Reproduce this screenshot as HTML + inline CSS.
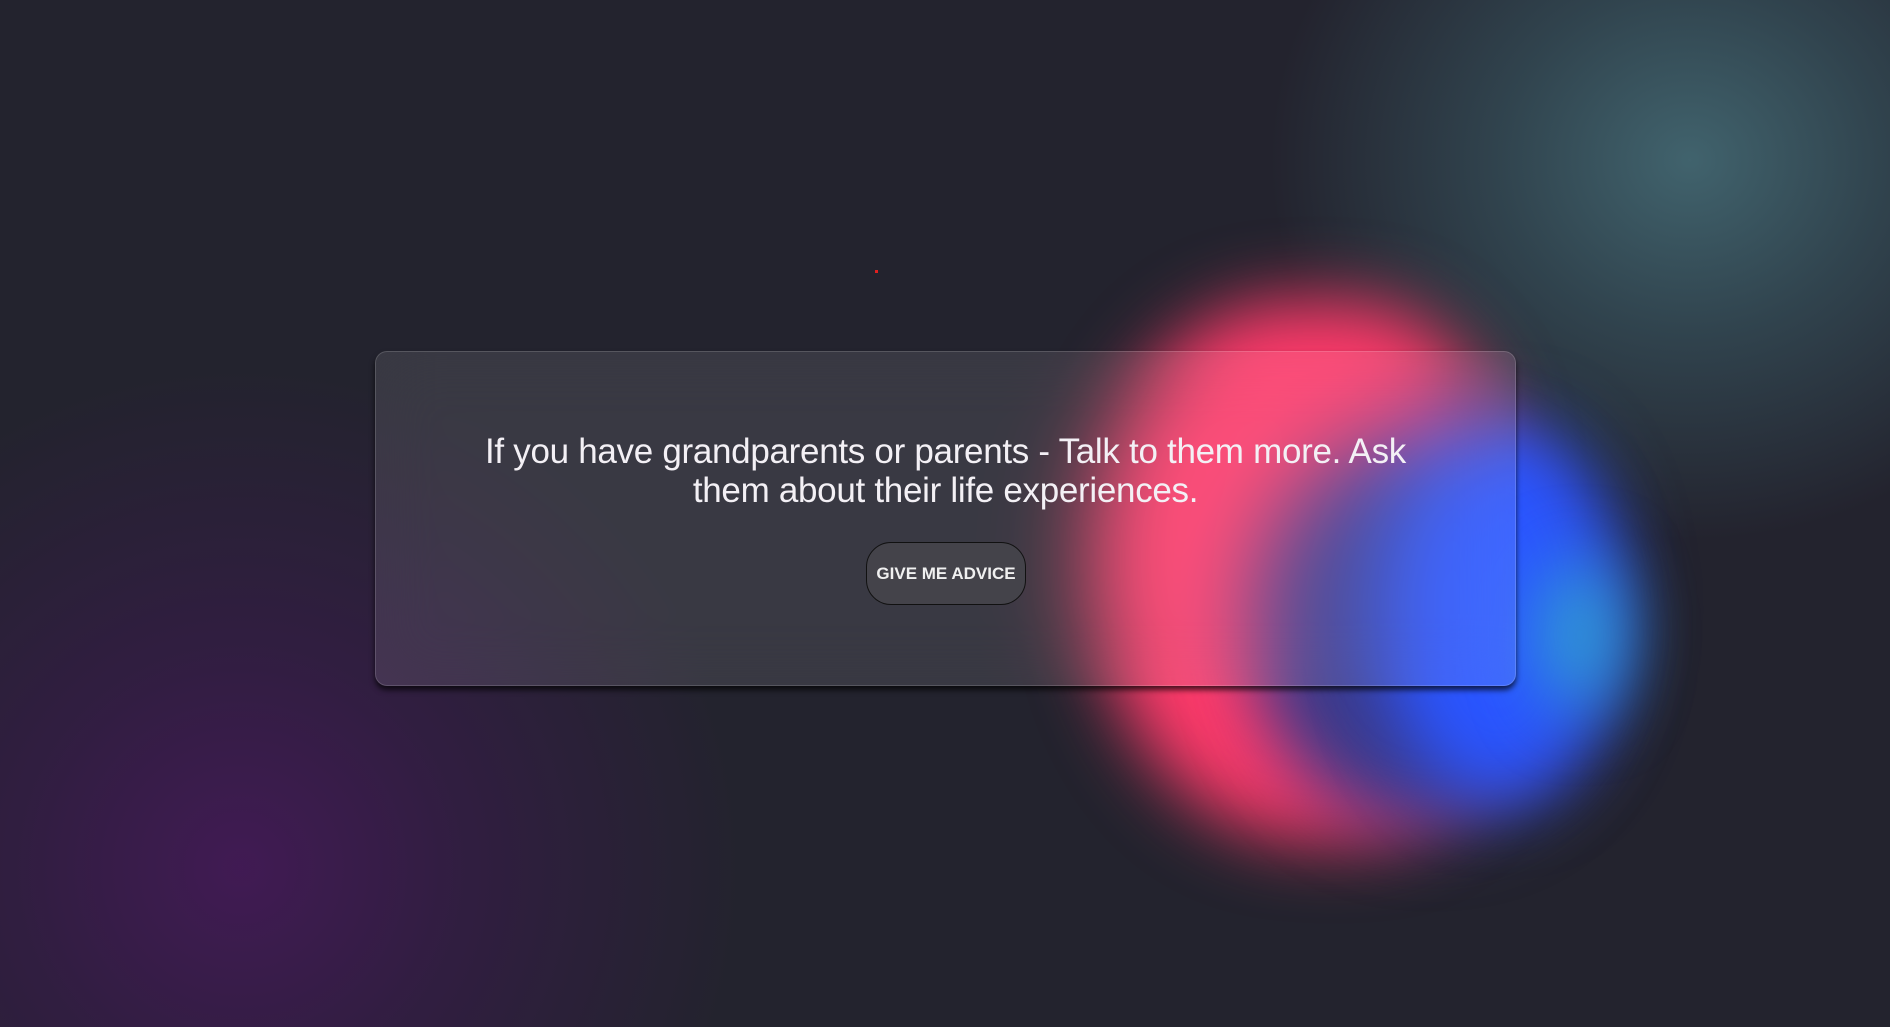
<!DOCTYPE html>
<html><head><style>
html,body{margin:0;padding:0;width:1890px;height:1027px;overflow:hidden;background:#23232e;font-family:"Liberation Sans",sans-serif;}
.bg{position:absolute;inset:0;background:
radial-gradient(circle at 241px 868px, rgba(70,25,90,0.85) 0, rgba(60,25,80,0.55) 220px, rgba(35,35,46,0) 500px),
radial-gradient(ellipse 420px 380px at 1690px 160px, rgba(70,110,120,0.85) 0, rgba(60,95,105,0.55) 45%, rgba(35,35,46,0) 100%),
#23232e;}
.blob{position:absolute;border-radius:50%;}
.card{position:absolute;left:375px;top:351px;width:1141px;height:335px;border-radius:12px;
background:rgba(255,255,255,0.1);backdrop-filter:blur(30px);border:1px solid rgba(255,255,255,0.15);box-shadow:0 4px 6px rgba(0,0,0,0.7);box-sizing:border-box;}
.q{position:absolute;left:0;right:0;top:80px;text-align:center;color:#f3f0f5;font-size:35px;line-height:39px;padding:0 80px;letter-spacing:-0.3px;}
.btn{position:absolute;left:490px;top:190px;width:160px;height:63px;border-radius:25px;background:#44434a;border:1px solid #111;box-sizing:border-box;color:#f0f0f0;font-weight:bold;font-size:17px;display:flex;align-items:center;justify-content:center;}
</style></head><body>
<div class="bg"></div>
<div class="blob" style="left:1090px;top:300px;width:420px;height:540px;background:#ff3a6a;border-radius:55% 45% 40% 60%;filter:blur(35px);"></div>
<div class="blob" style="left:1250px;top:430px;width:360px;height:400px;background:#3a3a8a;filter:blur(35px);"></div>
<div class="blob" style="left:1380px;top:420px;width:240px;height:380px;background:#2a55ff;filter:blur(35px);"></div>
<div class="blob" style="left:1540px;top:560px;width:80px;height:150px;background:#30a0d0;filter:blur(35px);"></div>
<div style="position:absolute;left:875px;top:270px;width:3px;height:3px;background:#e02020"></div>
<div class="card">
<div class="q">If you have grandparents or parents - Talk to them more. Ask them about their life experiences.</div>
<div class="btn">GIVE ME ADVICE</div>
</div>
</body></html>
